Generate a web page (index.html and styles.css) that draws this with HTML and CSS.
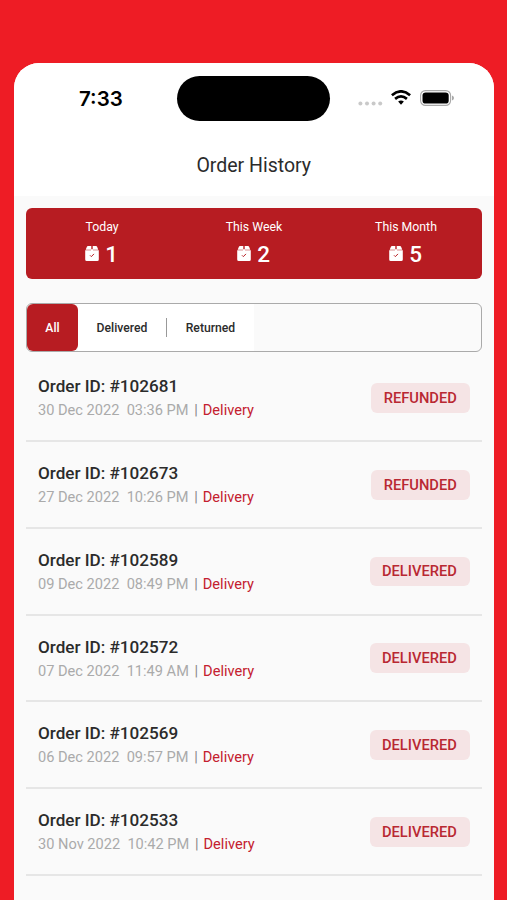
FILE: index.html
```html
<!DOCTYPE html>
<html lang="en">
<head>
<meta charset="utf-8">
<title>Order History</title>
<link rel="stylesheet" href="styles.css">
</head>
<body>
<svg class="defs" width="0" height="0" aria-hidden="true">
  <symbol id="box" viewBox="0 0 14 15">
    <path fill="#fff" d="M3 0H6.3V3.7H.7L1.9.8Q2.2 0 3 0ZM7.7 0H11Q11.8 0 12.1.8L13.3 3.7H7.7ZM.2 4.2H13.8V13.5Q13.8 15 12.3 15H1.7Q.2 15 .2 13.5ZM6 3.2H8V5H6Z"/>
    <path fill="none" stroke="#b71c22" stroke-width="1" d="M5 9.3 6.3 10.6 9 7.9"/>
  </symbol>
</svg>
<main class="phone">
  <header class="top">
    <div class="status">
      <span class="time">7:33</span>
      <div class="island"></div>
      <div class="signals">
        <svg width="25" height="5" viewBox="0 0 25 5" fill="#c9c9c9"><circle cx="2.4" cy="2.5" r="2"/><circle cx="9" cy="2.5" r="2"/><circle cx="15.6" cy="2.5" r="2"/><circle cx="22.2" cy="2.5" r="2"/></svg>
        <svg class="wifi" width="20" height="15" viewBox="0 0 20 15"><path fill="none" stroke="#000" stroke-width="2.7" d="M.9 5.2Q10-2.5 19.1 5.2M4.1 8.9Q10 3.9 15.9 8.9"/><path d="M7.1 11.6Q10 9.2 12.9 11.6L10 14.8Z"/></svg>
        <svg class="battery" width="34" height="16" viewBox="0 0 34 16"><rect x=".6" y=".6" width="30" height="14.8" rx="4.8" fill="none" stroke="#a8a8a8" stroke-width="1.1"/><rect x="2.5" y="2.4" width="26.2" height="11.2" rx="3.2"/><path fill="#a8a8a8" d="M32 5.5Q34 6.3 34 8T32 10.5Z"/></svg>
      </div>
    </div>
    <h1>Order History</h1>
  </header>
  <section class="stats">
    <div class="stat"><span>Today</span><strong><svg width="14" height="15"><use href="#box"/></svg>1</strong></div>
    <div class="stat"><span>This Week</span><strong><svg width="14" height="15"><use href="#box"/></svg>2</strong></div>
    <div class="stat"><span>This Month</span><strong><svg width="14" height="15"><use href="#box"/></svg>5</strong></div>
  </section>
  <nav class="tabs">
    <span class="tab active">All</span>
    <span class="tab delivered">Delivered</span>
    <span class="tab returned">Returned</span>
  </nav>
  <section class="orders">
    <article class="order"><div><h2>Order ID: #102681</h2><p>30 Dec 2022&nbsp; 03:36 PM <i>|</i> <em>Delivery</em></p></div><span class="badge">REFUNDED</span></article>
    <article class="order"><div><h2>Order ID: #102673</h2><p>27 Dec 2022&nbsp; 10:26 PM <i>|</i> <em>Delivery</em></p></div><span class="badge">REFUNDED</span></article>
    <article class="order"><div><h2>Order ID: #102589</h2><p>09 Dec 2022&nbsp; 08:49 PM <i>|</i> <em>Delivery</em></p></div><span class="badge">DELIVERED</span></article>
    <article class="order"><div><h2>Order ID: #102572</h2><p>07 Dec 2022&nbsp; 11:49 AM <i>|</i> <em>Delivery</em></p></div><span class="badge">DELIVERED</span></article>
    <article class="order"><div><h2>Order ID: #102569</h2><p>06 Dec 2022&nbsp; 09:57 PM <i>|</i> <em>Delivery</em></p></div><span class="badge">DELIVERED</span></article>
    <article class="order"><div><h2>Order ID: #102533</h2><p>30 Nov 2022&nbsp; 10:42 PM <i>|</i> <em>Delivery</em></p></div><span class="badge">DELIVERED</span></article>
    <article class="order"><div><h2>Order</h2></div></article>
  </section>
</main>
</body>
</html>
```
FILE: styles.css
```css
* { box-sizing: border-box; }
body {
  margin: 0;
  height: 900px;
  overflow: hidden;
  padding: 62.5px 13px 0 13.5px;
  background: #ee1c25;
  font-family: Roboto, "Liberation Sans", sans-serif;
  color: #2b2b2b;
}
.defs { position: absolute; }
.phone {
  height: 837.5px;
  overflow: hidden;
  border-radius: 25px 25px 0 0;
  background: #fafafa;
}
.top { height: 133.5px; background: #fff; }
.status {
  display: grid;
  grid-template-columns: 163.5px 153px 1fr;
  align-items: center;
  height: 72px;
}
.time {
  padding-left: 65.5px;
  font: 600 20.5px/24px Inter, sans-serif;
  color: #000;
}
.island { height: 45px; border-radius: 23px; background: #000; }
.signals { display: flex; align-items: center; padding-left: 28px; margin-top: -2px; }
.signals svg:first-child { margin-top: 11px; }
.wifi { margin-left: 8px; }
.battery { margin-left: 8.8px; }
h1 {
  margin: 19px 0 0;
  font-size: 19.5px;
  line-height: 24px;
  font-weight: 400;
  text-align: center;
}
.stats {
  display: grid;
  grid-template-columns: repeat(3, 1fr);
  height: 71px;
  margin: 11.5px 12px 0 12.5px;
  border-radius: 6px;
  background: #b71c22;
  color: #fff;
}
.stat { text-align: center; padding-top: 11px; }
.stat span { display: block; font-size: 12.3px; line-height: 16px; }
.stat strong {
  display: flex;
  justify-content: center;
  align-items: center;
  gap: 6.5px;
  margin-top: 6px;
  padding-right: 1px;
  font-size: 22.5px;
  line-height: 26px;
  font-weight: 500;
}
.tabs {
  display: flex;
  height: 49px;
  margin: 24.5px 12px 0 12.5px;
  border: 1px solid #aaa;
  border-radius: 6px;
  font-size: 12.2px;
  font-weight: 500;
}
.tab {
  display: flex;
  align-items: center;
  justify-content: center;
  background: #fff;
}
.active { width: 51px; border-radius: 6px; background: #b71c22; color: #fff; }
.delivered { width: 88px; }
.returned { width: 88px; justify-content: flex-start; }
.returned::before {
  content: "";
  width: 1px;
  height: 19px;
  margin-right: 18.7px;
  background: #999;
}
.orders { margin: 3.2px 12px 0 12.5px; }
.order {
  display: flex;
  justify-content: space-between;
  align-items: flex-start;
  height: 86.8px;
  padding: 19px 12px 0;
  border-bottom: 2px solid #e6e6e6;
}
h2 { margin: 0; font-size: 17.1px; line-height: 24px; font-weight: 500; }
p { margin: 0.1px 0 0; font-size: 14.6px; line-height: 24px; color: #aaa; white-space: nowrap; }
i, em { font-style: normal; }
i { margin: 0 1.4px 0 2px; color: #888; }
em { color: #c4202f; }
.badge {
  margin-top: 8.8px;
  padding: 0.8px 13.2px 0 12.2px;
  border-radius: 6px;
  background: #f5e4e5;
  color: #b92832;
  font-size: 14.7px;
  line-height: 29px;
  font-weight: 500;
}
```
